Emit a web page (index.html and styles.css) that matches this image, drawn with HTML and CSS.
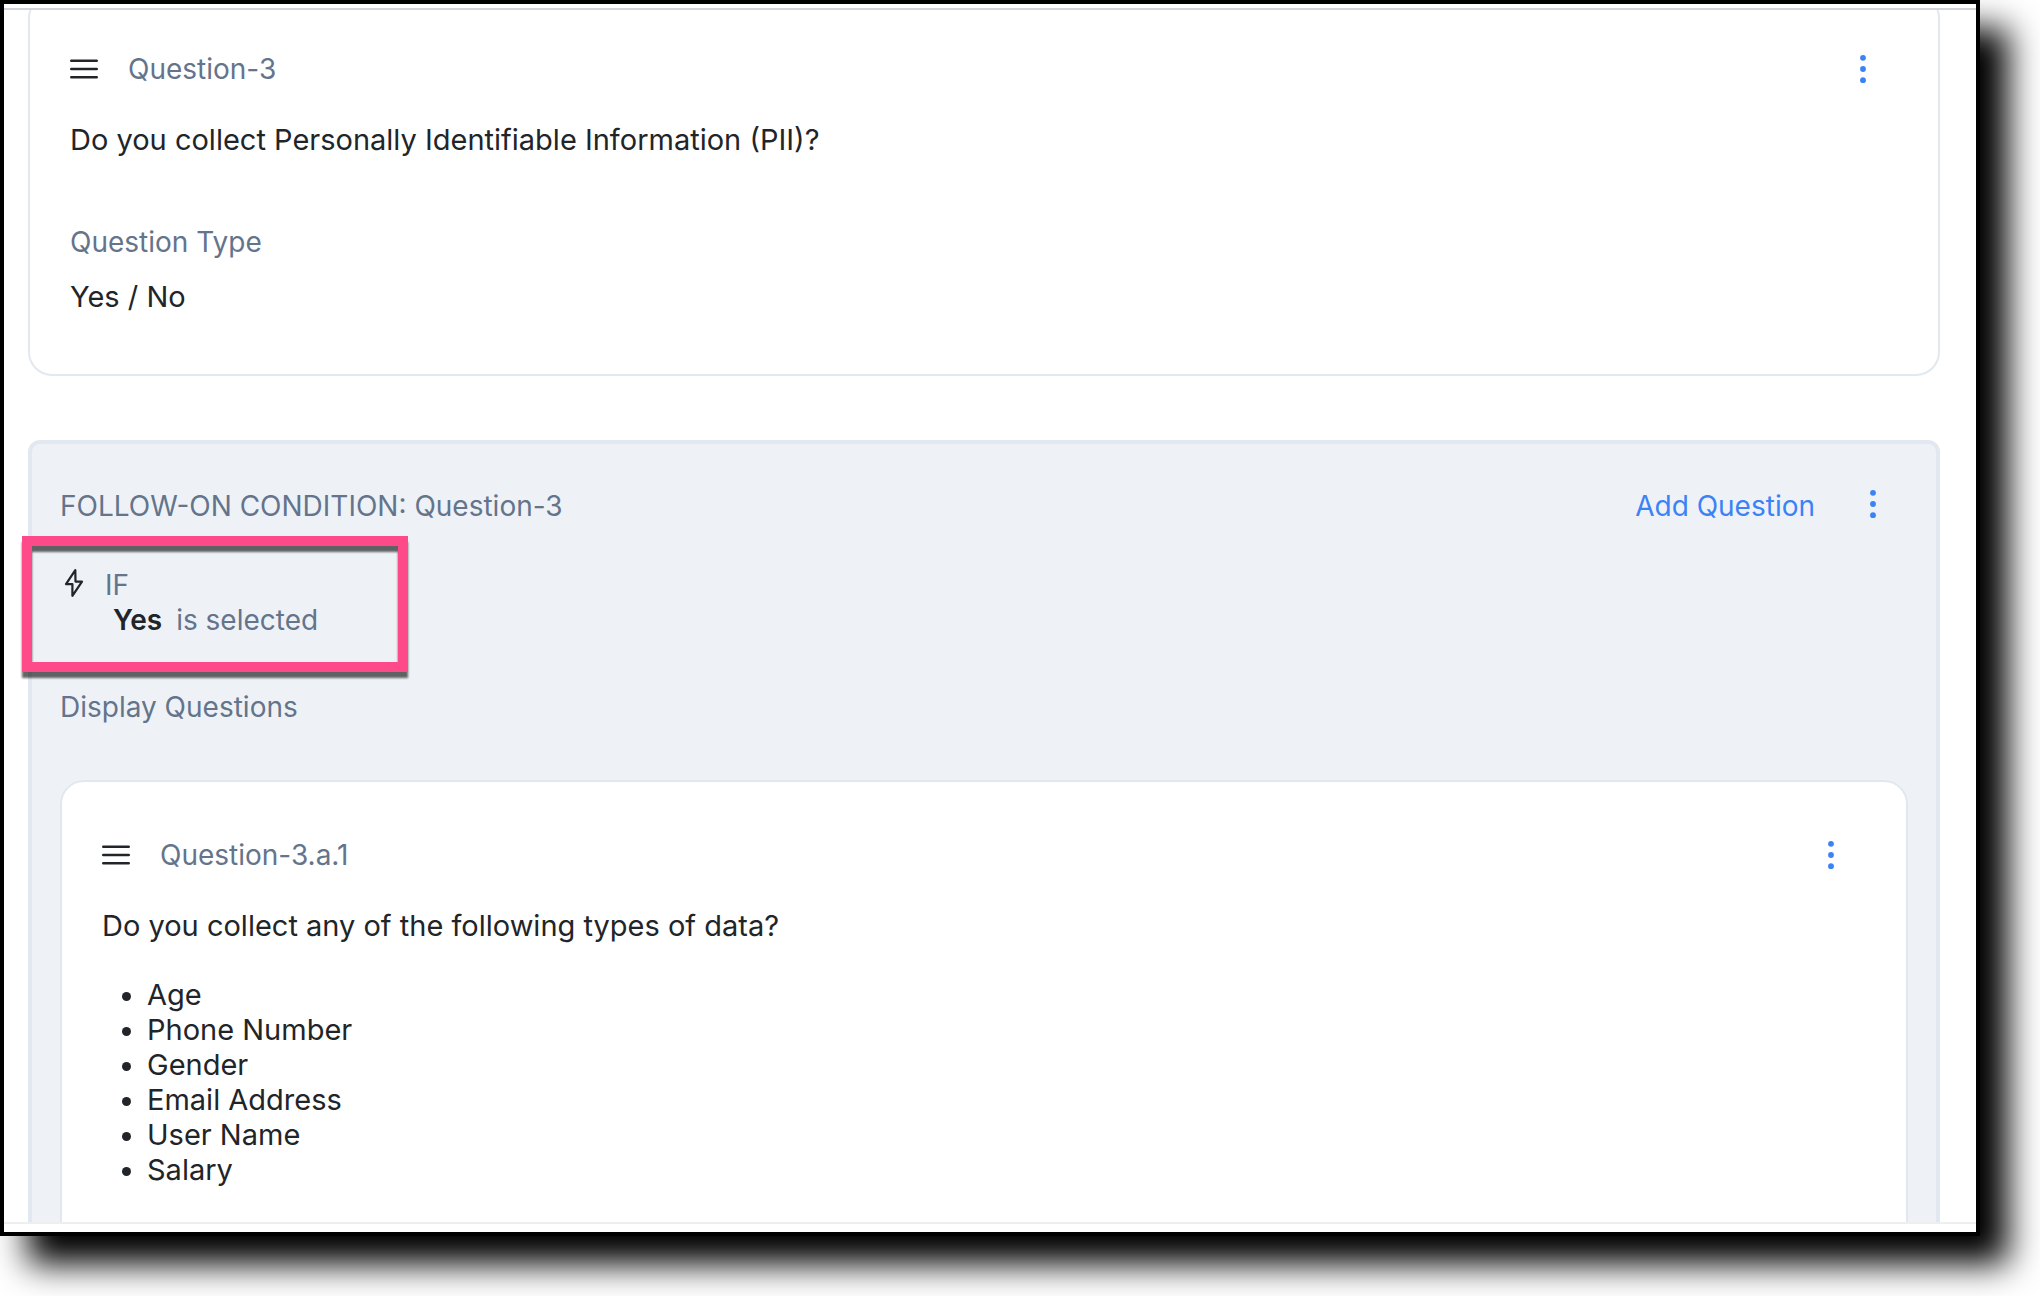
FILE: index.html
```html
<!DOCTYPE html>
<html lang="en">
<head>
  <meta charset="utf-8">
  <title>Questionnaire builder</title>
  <link rel="stylesheet" href="styles.css">
</head>
<body>
  <main class="frame">
    <div class="pane">
      <article class="card card-first">
        <header class="card-header">
          <svg class="icon" width="28" height="20" viewBox="0 0 28 20" fill="none" stroke="currentColor" stroke-width="2.6" stroke-linecap="round" aria-hidden="true"><path d="M1.3 1.8H26.7M1.3 10H26.7M1.3 18.2H26.7"/></svg>
          <span class="card-name">Question-3</span>
          <button class="menu" type="button" aria-label="Question-3 actions">
            <svg width="6" height="30" viewBox="0 0 6 30" fill="currentColor" aria-hidden="true"><circle cx="3" cy="3.8" r="2.9"/><circle cx="3" cy="15" r="2.9"/><circle cx="3" cy="26.2" r="2.9"/></svg>
          </button>
        </header>
        <p class="prompt">Do you collect Personally Identifiable Information (PII)?</p>
        <dl class="details">
          <dt>Question Type</dt>
          <dd>Yes / No</dd>
        </dl>
      </article>

      <section class="condition">
        <header class="condition-header">
          <span>FOLLOW-ON CONDITION: Question-3</span>
          <button class="add" type="button">Add Question</button>
          <button class="menu" type="button" aria-label="Condition actions">
            <svg width="6" height="30" viewBox="0 0 6 30" fill="currentColor" aria-hidden="true"><circle cx="3" cy="3.8" r="2.9"/><circle cx="3" cy="15" r="2.9"/><circle cx="3" cy="26.2" r="2.9"/></svg>
          </button>
        </header>

        <div class="rule">
          <svg class="icon" width="28" height="30" viewBox="0 0 28 30" fill="none" stroke="currentColor" stroke-width="2.2" stroke-linejoin="round" aria-hidden="true"><path d="M15.3 2.2L6 16.2H12.4L12.4 27.8L22 13.6H15.5Z"/></svg>
          <div>
            <div>IF</div>
            <div class="rule-value"><strong>Yes</strong><span>is selected</span></div>
          </div>
          <div class="highlight"></div>
        </div>

        <p class="display-label">Display Questions</p>

        <article class="card">
          <header class="card-header">
            <svg class="icon" width="28" height="20" viewBox="0 0 28 20" fill="none" stroke="currentColor" stroke-width="2.6" stroke-linecap="round" aria-hidden="true"><path d="M1.3 1.8H26.7M1.3 10H26.7M1.3 18.2H26.7"/></svg>
            <span class="card-name">Question-3.a.1</span>
            <button class="menu" type="button" aria-label="Question-3.a.1 actions">
              <svg width="6" height="30" viewBox="0 0 6 30" fill="currentColor" aria-hidden="true"><circle cx="3" cy="3.8" r="2.9"/><circle cx="3" cy="15" r="2.9"/><circle cx="3" cy="26.2" r="2.9"/></svg>
            </button>
          </header>
          <p class="prompt">Do you collect any of the following types of data?</p>
          <ul class="choices">
            <li>Age</li>
            <li>Phone Number</li>
            <li>Gender</li>
            <li>Email Address</li>
            <li>User Name</li>
            <li>Salary</li>
          </ul>
        </article>
      </section>
    </div>
  </main>
</body>
</html>
```
FILE: styles.css
```css
* {
  box-sizing: border-box;
}

body {
  display: flex;
  height: 100vh;
  margin: 0;
  padding: 0 60px 60px 0;
  overflow: hidden;
  background: #fff;
  color: #212529;
  font-family: Inter, "Liberation Sans", sans-serif;
  font-size: 28px;
  line-height: 35px;
}

p,
dl,
dd,
ul {
  margin: 0;
}

button {
  padding: 0;
  border: 0;
  background: none;
  color: #3b82f6;
  font: inherit;
  cursor: pointer;
}

.frame {
  display: flex;
  flex: 1;
  flex-direction: column;
  min-width: 0;
  padding: 4px 0 8px;
  border: 4px solid #000;
  background: #fff;
  box-shadow: 28px 28px 32px #000;
}

/* Scroll area between the top and bottom rules */
.pane {
  flex: 1;
  min-height: 0;
  padding: 0 36px 0 24px;
  overflow: hidden;
  border-top: 2px solid #d1d5db;
  border-bottom: 2px solid #eee;
}

.card {
  padding: 55px 72px 60px 40px;
  border: 2px solid #e2e8f0;
  border-radius: 24px;
  background: #fff;
}

/* The pane is scrolled slightly past the card's top edge */
.card-first {
  margin-top: -16px;
}

.card-header,
.condition-header {
  display: flex;
  align-items: center;
  color: #64748b;
}

.icon {
  flex: none;
  color: #212529;
}

.card-name {
  margin-left: 30px;
  padding-top: 1px;
}

.menu {
  display: flex;
  margin-left: auto;
}

.prompt,
.details dd,
.choices {
  font-size: 29px;
}

.prompt {
  margin-top: 35px;
}

.details {
  margin-top: 68px;
}

.details dt {
  color: #64748b;
}

.details dd {
  margin-top: 19px;
}

.condition {
  margin-top: 64px;
  padding: 45px 28px;
  border: 4px solid #e1e8f0;
  border-radius: 12px;
  background: #eef2f7;
  color: #64748b;
}

.condition-header {
  align-items: flex-start;
  padding-right: 32px;
}

.condition-header .add {
  margin-left: auto;
}

.condition-header .menu {
  margin-left: 55px;
}

.rule {
  display: flex;
  position: relative;
  gap: 17px;
  margin-top: 44px;
}

.rule-value {
  display: flex;
  gap: 14px;
  padding-left: 8px;
}

.rule-value strong {
  color: #212529;
  font-weight: 600;
}

.highlight {
  position: absolute;
  top: -32px;
  left: -38px;
  width: 386px;
  height: 136px;
  border: 10px solid #ff4a8a;
  filter: drop-shadow(0 6px 1px rgba(0, 0, 0, 0.6));
  pointer-events: none;
}

.display-label {
  margin: 52px 0 55px;
}

.condition .card {
  color: #212529;
}

.choices {
  margin-top: 34px;
  padding-left: 45px;
}
```
